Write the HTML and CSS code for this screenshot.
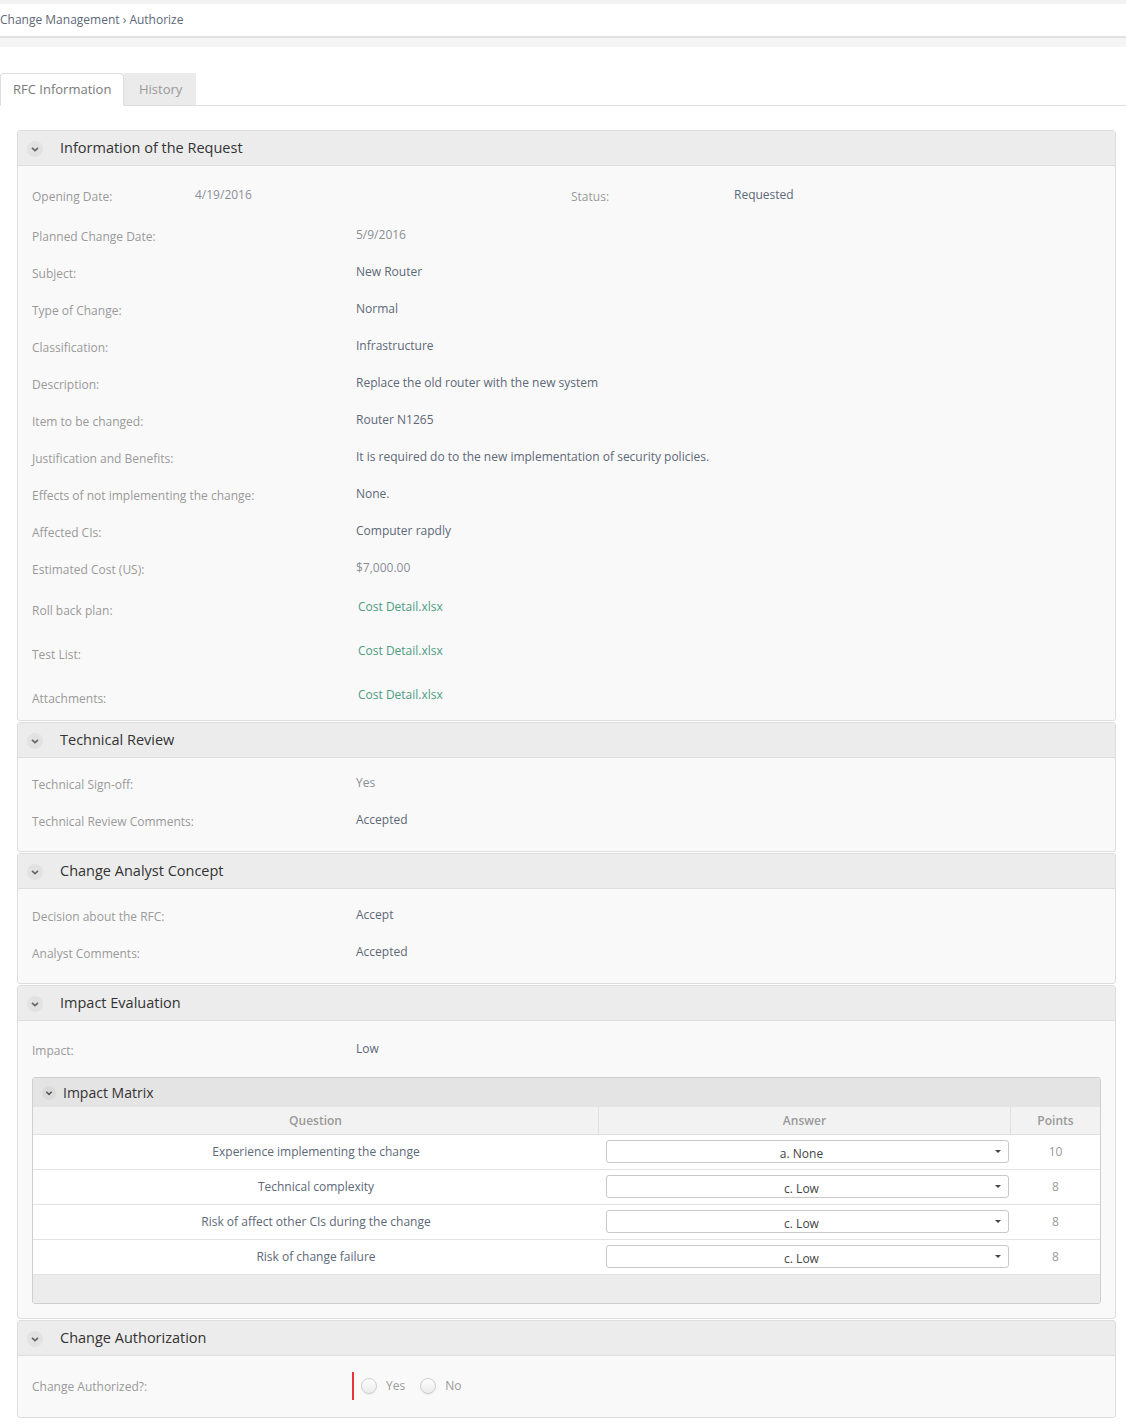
FILE: index.html
```html
<!DOCTYPE html>
<html>
<head>
<meta charset="utf-8">
<link rel="stylesheet" href="styles.css">
</head>
<body>
<div class="topstrip"></div>
<div class="breadcrumb">Change Management › Authorize</div>
<div class="band"></div>

<div class="tabs">
  <div class="tab tab-active">RFC Information</div>
  <div class="tab tab-inactive">History</div>
</div>

<main class="main">
  <section class="panel">
    <header class="panel-head">
      <svg class="chev" width="16" height="16" viewBox="0 0 16 16"><circle cx="8" cy="8" r="8" fill="#e2e2e2"/><path d="M5 6.8 L8 9.6 L11 6.8" fill="none" stroke="#666" stroke-width="1.6"/></svg>
      <span class="panel-title">Information of the Request</span>
    </header>
    <div class="panel-body body-first">
      <div class="row row-split">
        <div class="lbl">Opening Date:</div>
        <div class="val val-light">4/19/2016</div>
        <div class="lbl">Status:</div>
        <div class="val">Requested</div>
      </div>
      <div class="row"><div class="lbl">Planned Change Date:</div><div class="val val-light">5/9/2016</div></div>
      <div class="row"><div class="lbl">Subject:</div><div class="val">New Router</div></div>
      <div class="row"><div class="lbl">Type of Change:</div><div class="val">Normal</div></div>
      <div class="row"><div class="lbl">Classification:</div><div class="val">Infrastructure</div></div>
      <div class="row"><div class="lbl">Description:</div><div class="val">Replace the old router with the new system</div></div>
      <div class="row"><div class="lbl">Item to be changed:</div><div class="val">Router N1265</div></div>
      <div class="row"><div class="lbl">Justification and Benefits:</div><div class="val">It is required do to the new implementation of security policies.</div></div>
      <div class="row"><div class="lbl">Effects of not implementing the change:</div><div class="val">None.</div></div>
      <div class="row"><div class="lbl">Affected CIs:</div><div class="val">Computer rapdly</div></div>
      <div class="row"><div class="lbl">Estimated Cost (US):</div><div class="val val-light">$7,000.00</div></div>
      <div class="row row-link"><div class="lbl">Roll back plan:</div><div class="val"><a class="link">Cost Detail.xlsx</a></div></div>
      <div class="row row-link"><div class="lbl">Test List:</div><div class="val"><a class="link">Cost Detail.xlsx</a></div></div>
      <div class="row row-link"><div class="lbl">Attachments:</div><div class="val"><a class="link">Cost Detail.xlsx</a></div></div>
    </div>
  </section>

  <section class="panel">
    <header class="panel-head">
      <svg class="chev" width="16" height="16" viewBox="0 0 16 16"><circle cx="8" cy="8" r="8" fill="#e2e2e2"/><path d="M5 6.8 L8 9.6 L11 6.8" fill="none" stroke="#666" stroke-width="1.6"/></svg>
      <span class="panel-title">Technical Review</span>
    </header>
    <div class="panel-body body-tech">
      <div class="row"><div class="lbl">Technical Sign-off:</div><div class="val val-light">Yes</div></div>
      <div class="row"><div class="lbl">Technical Review Comments:</div><div class="val">Accepted</div></div>
    </div>
  </section>

  <section class="panel">
    <header class="panel-head">
      <svg class="chev" width="16" height="16" viewBox="0 0 16 16"><circle cx="8" cy="8" r="8" fill="#e2e2e2"/><path d="M5 6.8 L8 9.6 L11 6.8" fill="none" stroke="#666" stroke-width="1.6"/></svg>
      <span class="panel-title">Change Analyst Concept</span>
    </header>
    <div class="panel-body body-analyst">
      <div class="row"><div class="lbl">Decision about the RFC:</div><div class="val">Accept</div></div>
      <div class="row"><div class="lbl">Analyst Comments:</div><div class="val">Accepted</div></div>
    </div>
  </section>

  <section class="panel">
    <header class="panel-head">
      <svg class="chev" width="16" height="16" viewBox="0 0 16 16"><circle cx="8" cy="8" r="8" fill="#e2e2e2"/><path d="M5 6.8 L8 9.6 L11 6.8" fill="none" stroke="#666" stroke-width="1.6"/></svg>
      <span class="panel-title">Impact Evaluation</span>
    </header>
    <div class="panel-body body-impact">
      <div class="row"><div class="lbl">Impact:</div><div class="val">Low</div></div>
      <div class="matrix">
        <div class="matrix-head">
          <svg class="chev-sm" width="14" height="14" viewBox="0 0 14 14"><circle cx="7" cy="7" r="7" fill="#dadada"/><path d="M4.3 5.8 L7 8.4 L9.7 5.8" fill="none" stroke="#555" stroke-width="1.5"/></svg>
          <span class="matrix-title">Impact Matrix</span>
        </div>
        <div class="grid">
          <div class="th">Question</div><div class="th">Answer</div><div class="th th-last">Points</div>

          <div class="td">Experience implementing the change</div>
          <div class="td td-sel"><div class="select">a. None<span class="caret"></span></div></div>
          <div class="td td-pts">10</div>

          <div class="td">Technical complexity</div>
          <div class="td td-sel"><div class="select">c. Low<span class="caret"></span></div></div>
          <div class="td td-pts">8</div>

          <div class="td">Risk of affect other CIs during the change</div>
          <div class="td td-sel"><div class="select">c. Low<span class="caret"></span></div></div>
          <div class="td td-pts">8</div>

          <div class="td">Risk of change failure</div>
          <div class="td td-sel"><div class="select">c. Low<span class="caret"></span></div></div>
          <div class="td td-pts">8</div>
        </div>
        <div class="matrix-foot"></div>
      </div>
    </div>
  </section>

  <section class="panel">
    <header class="panel-head">
      <svg class="chev" width="16" height="16" viewBox="0 0 16 16"><circle cx="8" cy="8" r="8" fill="#e2e2e2"/><path d="M5 6.8 L8 9.6 L11 6.8" fill="none" stroke="#666" stroke-width="1.6"/></svg>
      <span class="panel-title">Change Authorization</span>
    </header>
    <div class="panel-body body-auth">
      <div class="row row-auth">
        <div class="lbl">Change Authorized?:</div>
        <div class="radios">
          <span class="required"></span>
          <label class="radio"><span class="dot"></span>Yes</label>
          <label class="radio"><span class="dot"></span>No</label>
        </div>
      </div>
    </div>
  </section>
</main>
</body>
</html>
```

FILE: styles.css
```css
* { box-sizing: border-box; }
html, body { margin: 0; padding: 0; }
body {
  font-family: "Open Sans", "Noto Sans", sans-serif;
  font-size: 12px;
  color: #5d6878;
  background: #fff;
  width: 1126px;
}
.topstrip { height: 4px; background: #f2f2f2; }
.breadcrumb {
  height: 34px;
  line-height: 32px;
  background: #fff;
  border-bottom: 2px solid #e2e2e2;
  color: #5d6878;
  font-size: 12px;
}
.band { height: 9px; background: #f5f5f5; }

.tabs {
  display: flex;
  margin-top: 26px;
  height: 33px;
  border-bottom: 1px solid #dddddd;
}
.tab {
  height: 32px;
  line-height: 31px;
  font-size: 13px;
}
.tab-active {
  width: 124px;
  padding-left: 12px;
  color: #7a7a7a;
  background: #fff;
  border: 1px solid #dddddd;
  border-bottom: 1px solid #fff;
  border-radius: 4px 4px 0 0;
  height: 33px;
}
.tab-inactive {
  width: 72px;
  padding-left: 15px;
  line-height: 33px;
  color: #999;
  background: #ebebeb;
}

.main { padding: 24px 10px 8px 17px; }

.panel {
  border: 1px solid #dddddd;
  border-radius: 3px;
  background: #f9f9f9;
  margin-bottom: 1px;
}
.panel-head {
  height: 35px;
  background: #ececec;
  border-bottom: 1px solid #dedede;
  display: flex;
  align-items: center;
  padding-left: 9px;
  padding-bottom: 2px;
}
.chev { flex: none; margin-top: 3px; }
.panel-title {
  margin-left: 17px;
  font-size: 14.5px;
  color: #333;
}
.panel-body { padding: 8px 14px 12px 14px; }
.body-first { padding-top: 11px; padding-bottom: 1px; }
.body-tech { padding-top: 7px; padding-bottom: 12px; }
.body-analyst { padding-top: 8px; padding-bottom: 12px; }
.body-impact { padding-top: 10px; padding-bottom: 14px; }
.body-auth { padding-top: 11px; padding-bottom: 12px; }

.row {
  display: grid;
  grid-template-columns: 324px 1fr;
  height: 37px;
  align-items: start;
}
.row-split {
  grid-template-columns: 163px 376px 163px 1fr;
  height: 40px;
}
.lbl {
  color: #9a9a9a;
  line-height: 18px;
  padding-top: 11px;
}
.val {
  line-height: 18px;
  padding-top: 9px;
  color: #5d6878;
}
.val-light { color: #8a8f96; }
.row-link { height: 44px; }
.row-link .lbl { padding-top: 15px; }
.row-link .val { padding-top: 11px; padding-left: 2px; }
.link { color: #4f9c82; text-decoration: none; }

.matrix {
  margin-top: 9px;
  border: 1px solid #cfcfcf;
  border-radius: 3px;
  background: #fff;
  overflow: hidden;
}
.matrix-head {
  height: 29px;
  background: #e4e4e4;
  display: flex;
  align-items: center;
  padding-left: 9px;
}
.matrix-title { margin-left: 7px; font-size: 14px; color: #333; }
.grid {
  display: grid;
  grid-template-columns: 566px 412px 1fr;
}
.th {
  height: 28px;
  line-height: 28px;
  background: #f2f2f2;
  text-align: center;
  font-weight: 600;
  color: #9a9a9a;
  border-right: 1px solid #e0e0e0;
  border-bottom: 1px solid #e0e0e0;
}
.th-last { border-right: none; }
.td {
  height: 35px;
  line-height: 34px;
  text-align: center;
  color: #5d6878;
  border-bottom: 1px solid #e3e3e3;
}
.td-sel { padding: 5px 2px 0 7px; }
.td-pts { color: #9a9a9a; }
.select {
  position: relative;
  height: 23px;
  line-height: 23px;
  border: 1px solid #c8c8c8;
  border-radius: 3px;
  background: #fff;
  text-align: center;
  color: #444;
  padding-top: 1px;
  padding-right: 12px;
}
.caret {
  position: absolute;
  right: 7px;
  top: 9px;
  width: 0;
  height: 0;
  border-left: 3px solid transparent;
  border-right: 3px solid transparent;
  border-top: 3px solid #444;
}
.matrix-foot { height: 28px; background: #ececec; }

.row-auth { height: 38px; }
.radios {
  display: flex;
  align-items: center;
  height: 28px;
  margin-top: 5px;
  color: #9a9a9a;
}
.required {
  width: 2px;
  height: 28px;
  background: #e8333a;
  margin-left: -4px;
  margin-right: 7px;
}
.radio {
  display: flex;
  align-items: center;
  margin-right: 15px;
  line-height: 18px;
}
.dot {
  width: 16px;
  height: 16px;
  border-radius: 50%;
  border: 1px solid #cfcfcf;
  background: linear-gradient(#fdfdfd, #ececec);
  box-shadow: 0 1px 1px rgba(0,0,0,0.06);
  margin-right: 9px;
}
```
